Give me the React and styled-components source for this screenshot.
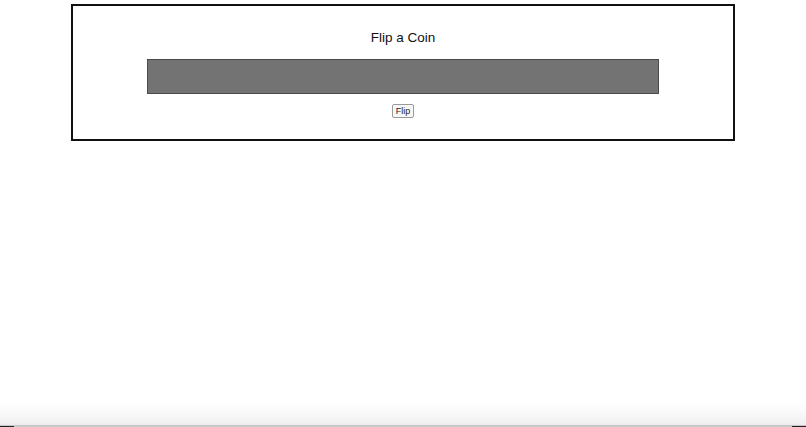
import React from "react";
import styled, { createGlobalStyle } from "styled-components";

const Global = createGlobalStyle`
  html, body { margin: 0; padding: 0; background: #fff; }
  body { font-family: "Liberation Sans", Arial, Helvetica, sans-serif; color: #000; }
`;

const Page = styled.div`
  padding-top: 4px;
`;

const Card = styled.section`
  box-sizing: border-box;
  width: 664px;
  margin: 0 auto;
  border: 2px solid #111;
  padding: 24px 0 21px;
  display: flex;
  flex-direction: column;
  align-items: center;
`;

const Title = styled.h1`
  margin: 0;
  font-size: 13.5px;
  line-height: 16px;
  font-weight: 400;
  color: #111;
`;

const Coin = styled.div`
  box-sizing: border-box;
  margin-top: 13px;
  width: 512px;
  height: 35px;
  background: #737373;
  border: 1px solid #4a4a4a;
`;

const FlipButton = styled.button`
  box-sizing: border-box;
  margin-top: 10px;
  height: 14px;
  width: 22px;
  padding: 0;
  font-family: "Liberation Sans", Arial, sans-serif;
  font-size: 9px;
  line-height: 12px;
  color: #222;
  background: #f7f7f7;
  border: 1px solid #9a9a9a;
  border-radius: 2px;
`;

const WindowEdge = styled.div`
  position: fixed;
  left: 0;
  right: 0;
  bottom: 0;
  height: 24px;
  background: linear-gradient(to bottom, rgba(240,240,240,0) 0%, #f3f3f3 75%, #ebebeb 92%, #c9c9c9 92%, #c9c9c9 100%);
  &::before, &::after {
    content: "";
    position: absolute;
    bottom: 0;
    width: 14px;
    height: 1px;
    background: #222;
  }
  &::before { left: 0; }
  &::after { right: 0; }
`;

export default function App() {
  return (
    <Page>
      <Global />
      <Card>
        <Title>Flip a Coin</Title>
        <Coin />
        <FlipButton>Flip</FlipButton>
      </Card>
      <WindowEdge />
    </Page>
  );
}
